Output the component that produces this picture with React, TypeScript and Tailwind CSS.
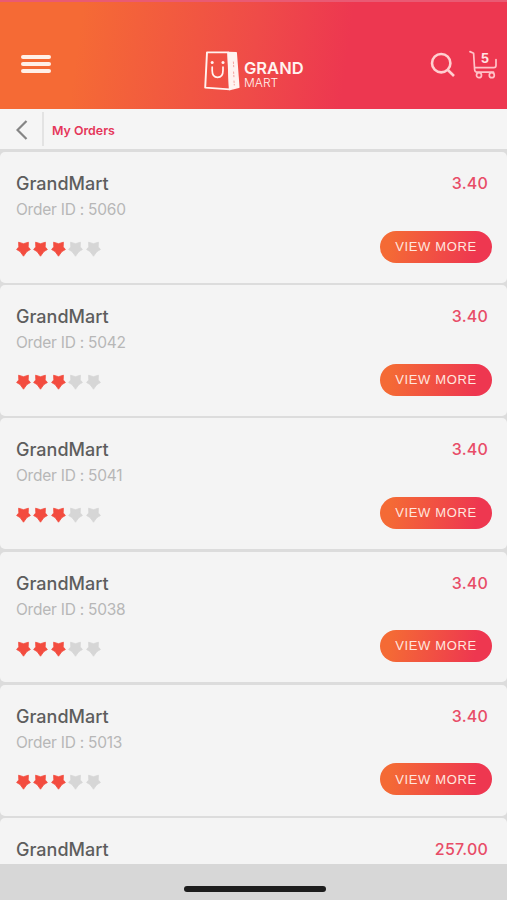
import React from 'react';

interface Order {
  store: string;
  total: string;
  details?: { id: string; rating: number };
}

const orders: Order[] = [
  { store: 'GrandMart', total: '3.40', details: { id: '5060', rating: 3 } },
  { store: 'GrandMart', total: '3.40', details: { id: '5042', rating: 3 } },
  { store: 'GrandMart', total: '3.40', details: { id: '5041', rating: 3 } },
  { store: 'GrandMart', total: '3.40', details: { id: '5038', rating: 3 } },
  { store: 'GrandMart', total: '3.40', details: { id: '5013', rating: 3 } },
  { store: 'GrandMart', total: '257.00' },
];

const Logo: React.FC = () => (
  <div className="flex items-start text-[#fff3f0]">
    <svg className="w-9 h-10" viewBox="0 0 36 40" fill="none" stroke="currentColor" strokeLinejoin="round" strokeLinecap="round">
      <path d="M3 1.4H24.2L25.8 38.4L1.2 36.6Z" strokeWidth="1.9" />
      <path d="M24.2 1.4L32.2 1.7L34.8 36.2L25.8 38.6Z" fill="currentColor" strokeWidth="1.5" />
      <path d="M8.2 16V19.5C8.2 24 10.6 26.3 13.6 26.3S19 24 19 19.5V16" strokeWidth="1.7" />
      <circle cx="8.2" cy="11.6" r="1.5" fill="currentColor" stroke="none" />
      <circle cx="19" cy="11.6" r="1.5" fill="currentColor" stroke="none" />
      <path d="M29.4 11L29.8 17M29.6 21L30 27M30 30L30.3 34" stroke="#f59a96" strokeWidth="0.9" strokeDasharray="1.5 1.8" />
    </svg>
    <div className="mt-[9px] ml-1 flex flex-col">
      <span className="text-[16.5px] leading-[17px] font-semibold">GRAND</span>
      <span className="text-[12px] leading-[12px] font-light">MART</span>
    </div>
  </div>
);

const Header: React.FC = () => (
  <header className="h-[109px] shrink-0 border-t-2 border-[#e95a73] bg-[linear-gradient(98deg,#f56a35_16%,#ef4b48_50%,#ed3750_68%)] flex items-start text-[#ffe9e6]">
    <button className="mt-[53px] ml-[21px] w-[30px] flex flex-col gap-[3px]" aria-label="Menu">
      <span className="h-1 w-full rounded-sm bg-[#fff0e8]" />
      <span className="h-1 w-full rounded-sm bg-[#fff0e8]" />
      <span className="h-1 w-full rounded-sm bg-[#fff0e8]" />
    </button>
    <div className="mt-[49px] ml-[153px]">
      <Logo />
    </div>
    <div className="mt-[47px] mr-[10px] ml-auto flex items-start gap-[14px]">
      <svg className="mt-[3px] w-[25px] h-[26px]" viewBox="0 0 25 26" fill="none" stroke="#ffcfd0" strokeWidth="2.6">
        <circle cx="11.2" cy="11.2" r="9.2" />
        <path d="M17.6 17.8L24 24" />
      </svg>
      <svg className="mt-px w-7 h-[29px]" viewBox="0 0 28 29" fill="none" stroke="#ffc3c8" strokeWidth="1.7" strokeLinecap="round" strokeLinejoin="round">
        <path d="M1 1.6L4.6 3.2L5.6 19.5Q5.8 22.2 8 22.2H24.5M5.6 17.6H24.8Q27 17.6 27 15.5V9.5" />
        <circle cx="10" cy="25.2" r="2.5" />
        <circle cx="22.8" cy="25.2" r="2.5" />
        <text x="16" y="13" textAnchor="middle" fontSize="13" fontWeight="700" fill="#ffe3e3" stroke="none">5</text>
      </svg>
    </div>
  </header>
);

const Star: React.FC<{ filled: boolean }> = ({ filled }) => (
  <svg className="w-[15px] h-4" viewBox="0 0 15 16">
    <path
      d="M2.6 1.2L7.5 2.7L12.4 1.2L12.2 5.9L14.4 8.5L10.9 10.6L7.5 15.2L4.1 10.6L.6 8.5L2.8 5.9Z"
      strokeWidth="0.8"
      strokeLinejoin="round"
      fill={filled ? '#f34c3f' : '#d6d6d6'}
      stroke={filled ? '#f34c3f' : '#d6d6d6'}
    />
  </svg>
);

const OrderCard: React.FC<{ order: Order }> = ({ order }) => (
  <div className="h-[130.8px] shrink-0 rounded-[5px] bg-[#f4f4f4] pl-4 pr-[15px] pt-5">
    <div className="flex items-start justify-between pr-1">
      <h2 className="text-[18px] leading-6 font-medium text-[#5d5d5d]">{order.store}</h2>
      <span className="text-[16px] leading-[22px] font-medium tracking-[0.2px] text-[#e84c67]">{order.total}</span>
    </div>
    {order.details && (
      <>
        <p className="mt-[3px] text-[15.5px] leading-[22px] tracking-[-0.24px] text-[#b7b7b7]">Order ID : {order.details.id}</p>
        <div className="mt-[9.5px] flex items-start justify-between">
          <div className="mt-[10.5px] flex gap-[2.4px]">
            {[1, 2, 3, 4, 5].map((n) => (
              <Star key={n} filled={n <= order.details!.rating} />
            ))}
          </div>
          <button className="h-8 w-28 rounded-full bg-[linear-gradient(100deg,#f46a35_10%,#ee3750_85%)] text-[13px] tracking-[0.65px] text-[#ffe6df] font-['Liberation_Sans',sans-serif]">
            VIEW MORE
          </button>
        </div>
      </>
    )}
  </div>
);

export default function App() {
  return (
    <div className="w-[507px] h-[900px] overflow-hidden flex flex-col bg-[#dcdcdc] font-['Inter',sans-serif]">
      <Header />

      {/* Breadcrumb bar */}
      <div className="h-[40px] shrink-0 flex items-center bg-[#f5f5f5]">
        <svg className="ml-4 mt-[2px] w-3 h-5" viewBox="0 0 12 20" fill="none" stroke="#858585" strokeWidth="2.2">
          <path d="M10.5 1L1.5 10L10.5 19" />
        </svg>
        <div className="ml-[14px] h-[34px] w-[2px] bg-[#e3e3e3]" />
        <span className="ml-2 mt-[4px] text-[12.4px] font-semibold text-[#e5375a]">My Orders</span>
      </div>

      {/* Order list, clipped by the bottom bar */}
      <main className="mt-[3px] flex-1 min-h-0 overflow-hidden flex flex-col gap-[2.4px]">
        {orders.map((order, i) => (
          <OrderCard key={i} order={order} />
        ))}
      </main>

      {/* Home indicator */}
      <footer className="h-9 shrink-0 bg-[#d7d7d7] flex justify-center pt-[22px]">
        <div className="ml-[3px] h-[6px] w-[142px] rounded-full bg-[#1d1d1d]" />
      </footer>
    </div>
  );
}
